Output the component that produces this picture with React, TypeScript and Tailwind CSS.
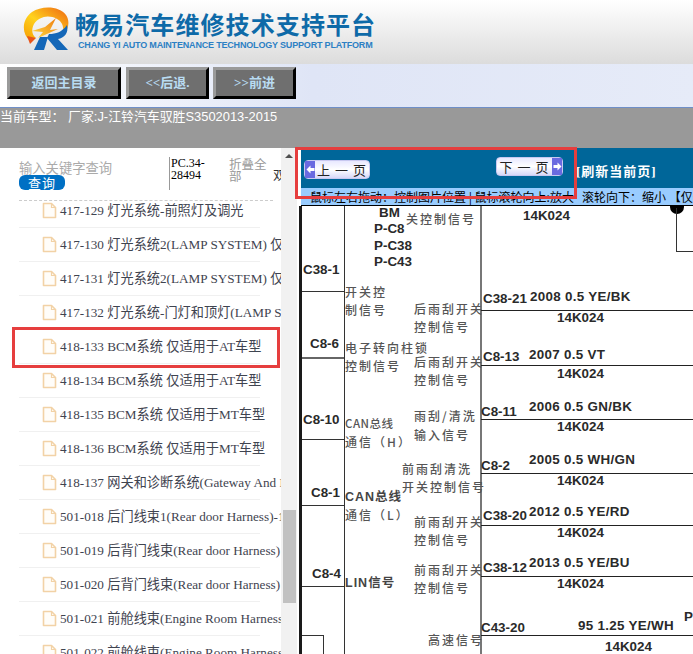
import React from "react";

const rows = [
  "417-129 灯光系统-前照灯及调光",
  "417-130 灯光系统2(LAMP SYSTEM) 仅适用于AT车型",
  "417-131 灯光系统2(LAMP SYSTEM) 仅适用于MT车型",
  "417-132 灯光系统-门灯和顶灯(LAMP SYSTEM)",
  "418-133 BCM系统 仅适用于AT车型",
  "418-134 BCM系统 仅适用于AT车型",
  "418-135 BCM系统 仅适用于MT车型",
  "418-136 BCM系统 仅适用于MT车型",
  "418-137 网关和诊断系统(Gateway And Diagnostic)",
  "501-018 后门线束1(Rear door Harness)-1",
  "501-019 后背门线束(Rear door Harness)",
  "501-020 后背门线束(Rear door Harness)",
  "501-021 前舱线束(Engine Room Harness)",
  "501-022 前舱线束(Engine Room Harness)",
];

type Kind = "b" | "y" | "c" | "m" | "s";
// [text, left, centerY, kind] in page coordinates.
const labels: [string, number, number, Kind][] = [
  ["BM", 379, 214, "b"], ["P-C8", 374, 230, "b"], ["P-C38", 374, 247, "b"], ["P-C43", 374, 263, "b"],
  ["关控制信号", 406, 220, "c"], ["14K024", 523, 217, "b"],
  ["C38-1", 303, 271, "b"], ["开关控", 345, 293, "c"], ["制信号", 345, 311, "c"],
  ["后雨刮开关", 414, 310, "c"], ["控制信号", 414, 328, "c"], ["C38-21", 483, 300, "b"],
  ["2008 0.5 YE/BK", 530, 298, "y"], ["14K024", 557, 319, "b"],
  ["C8-6", 310, 345, "b"], ["电子转向柱锁", 345, 349, "c"], ["控制信号", 345, 367, "c"],
  ["后雨刮开关", 414, 363, "c"], ["控制信号", 414, 381, "c"], ["C8-13", 483, 358, "b"],
  ["2007 0.5 VT", 529, 356, "y"], ["14K024", 557, 375, "b"],
  ["C8-10", 303, 421, "b"], ["CAN总线", 345, 425, "s"], ["通信（H）", 345, 443, "c"],
  ["雨刮/清洗", 414, 417, "c"], ["输入信号", 414, 436, "c"], ["C8-11", 481, 413, "b"],
  ["2006 0.5 GN/BK", 529, 408, "y"], ["14K024", 557, 428, "b"],
  ["C8-2", 481, 467, "b"], ["2005 0.5 WH/GN", 529, 461, "y"], ["14K024", 557, 482, "b"],
  ["前雨刮清洗", 402, 470, "c"], ["开关控制信号", 402, 488, "c"],
  ["C8-1", 311, 494, "b"], ["CAN总线", 345, 498, "m"], ["通信（L）", 345, 516, "c"],
  ["前雨刮开关", 414, 523, "c"], ["控制信号", 414, 541, "c"], ["C38-20", 483, 517, "b"],
  ["2012 0.5 YE/RD", 529, 513, "y"], ["14K024", 557, 534, "b"],
  ["C8-4", 312, 575, "b"], ["LIN信号", 345, 584, "m"], ["前雨刮开关", 414, 571, "c"], ["控制信号", 414, 589, "c"],
  ["C38-12", 483, 569, "b"], ["2013 0.5 YE/BU", 529, 564, "y"], ["14K024", 557, 585, "b"],
  ["P", 684, 618, "b"], ["95 1.25 YE/WH", 578, 627, "y"], ["C43-20", 481, 629, "b"],
  ["高速信号", 428, 641, "c"], ["14K024", 605, 648, "b"],
];

const labelClass: Record<Kind, string> = {
  b: "absolute -translate-y-1/2 whitespace-nowrap text-[13.4px] leading-none font-bold text-[#2a2a2a] font-['Liberation_Sans',sans-serif]",
  y: "absolute -translate-y-1/2 whitespace-nowrap text-[13.4px] leading-none tracking-[0.3px] font-bold text-[#2a2a2a] font-['Liberation_Sans',sans-serif]",
  c: "absolute -translate-y-1/2 whitespace-nowrap text-[12px] leading-none tracking-[2px] font-medium text-[#555] font-['Noto_Sans_CJK_SC',sans-serif]",
  m: "absolute -translate-y-1/2 whitespace-nowrap text-[12.5px] leading-none tracking-[1px] font-bold text-[#444] font-['Liberation_Sans','Noto_Sans_CJK_SC',sans-serif]",
  s: "absolute -translate-y-1/2 whitespace-nowrap text-[11.5px] leading-none tracking-[0.5px] font-medium text-[#555] font-['Noto_Sans_CJK_SC',sans-serif]",
};

function PageIcon() {
  return (
    <svg width="15" height="17" viewBox="0 0 15 17" className="shrink-0">
      <path d="M1.5 1.5H9.5L13.5 5.5V15.5H1.5Z" fill="#fffdf9" stroke="#f2d2a6" strokeWidth="1.6" strokeLinejoin="round" />
      <path d="M9.5 1.5V5.5H13.5" fill="none" stroke="#f2d2a6" strokeWidth="1.2" />
    </svg>
  );
}

function Logo() {
  return (
    <svg width="50" height="46" viewBox="22 6 50 46" className="shrink-0">
      <defs>
        <linearGradient id="ring" x1="0" y1="1" x2="1" y2="0">
          <stop offset="0" stopColor="#f59a00" />
          <stop offset="0.45" stopColor="#ffd21e" />
          <stop offset="1" stopColor="#ee6410" />
        </linearGradient>
        <linearGradient id="bolt" x1="0" y1="1" x2="1" y2="0">
          <stop offset="0" stopColor="#ffdc40" />
          <stop offset="1" stopColor="#ee7a10" />
        </linearGradient>
      </defs>
      <path d="M30 41C21 33 22 19 32 12C42 5 60 6 66 15C70 21 69 29 63 35C64 28 63 22 57 19C48 14 39 17 34 24C31 30 32 35 36 38L31 38Z" fill="url(#ring)" />
      <path d="M27 36L36 38L30 44Z" fill="#e8541a" />
      <path d="M32 31L45 27L56 18L50 30L58 29L38 38L43 32Z" fill="url(#bolt)" />
      <path d="M40 37L48 37L44 50L34 50Z" fill="#1467b8" />
      <path d="M49 34C56 34 62 32 67 25C69 33 64 38 58 39L68 50L57 50L47 38Z" fill="#1467b8" />
    </svg>
  );
}

function NavButton({ label, width }: { label: string; width: string }) {
  return (
    <button className={`${width} h-[32px] bg-[#6f6f6f] border-[3px] border-t-[#9a9a9a] border-l-[#9a9a9a] border-r-black border-b-black text-[#b9dcf2] font-bold text-[13px] font-['Liberation_Serif','Noto_Sans_CJK_SC',serif]`}>
      {label}
    </button>
  );
}

function PageButton({ label, dir, extra }: { label: string; dir: "left" | "right"; extra: string }) {
  const arrow = (
    <span className="w-[10px] shrink-0 self-stretch bg-[#6a6ae0] flex items-center justify-center">
      <svg width="9" height="9" viewBox="0 0 9 9">
        <path d={dir === "left" ? "M0.5 4.5L4.5 0.5V3H8.5V6H4.5V8.5Z" : "M8.5 4.5L4.5 0.5V3H0.5V6H4.5V8.5Z"} fill="#fff" />
      </svg>
    </span>
  );
  return (
    <div className={`flex items-center h-[19px] rounded-sm bg-gradient-to-b from-[#e8e8ff] via-white to-[#d8d8f8] border border-[#c8c8f0] text-[13px] tracking-[1px] text-[#222] font-['Noto_Sans_CJK_SC',sans-serif] ${extra}`}>
      {dir === "left" && arrow}
      <span className="flex-1 min-w-0 text-center whitespace-nowrap">{label}</span>
      {dir === "right" && arrow}
    </div>
  );
}

function Diagram() {
  const ox = 297;
  const oy = 207;
  const h = (x1: number, x2: number, y: number, cls: string) => (
    <div className={`absolute ${cls}`} style={{ left: x1 - ox, width: x2 - x1, top: y - oy }} />
  );
  return (
    <div className="relative flex-1 bg-white overflow-hidden">
      {/* vertical rules */}
      <div className="absolute left-[2px] top-0 bottom-0 w-[3px] bg-[#1a1a1a]" />
      <div className="absolute left-[47px] top-0 bottom-0 w-px bg-[#333]" />
      <div className="absolute left-[183px] top-0 bottom-0 w-[2px] bg-[#777]" />
      {/* left column rules */}
      {h(302, 344, 292, "h-px bg-[#333]")}
      {h(302, 344, 358, "h-[2px] bg-[#666]")}
      {h(302, 344, 440, "h-px bg-[#333]")}
      {h(302, 344, 506, "h-px bg-[#333]")}
      {h(302, 344, 587, "h-px bg-[#333]")}
      {h(302, 323, 636, "h-px bg-[#333]")}
      <div className="absolute left-[26px] top-[429px] bottom-0 w-px bg-[#333]" />
      {/* wire rules */}
      {[311, 366, 420, 474, 526, 577, 636].map((y) => (
        <React.Fragment key={y}>{h(481, 693, y, "h-px bg-[#222]")}</React.Fragment>
      ))}
      {/* node */}
      <div className="absolute left-[373px] top-[-6px] w-[14px] h-[14px] rounded-full bg-black" />
      <div className="absolute left-[379px] top-[2px] w-px h-[43px] bg-[#333]" />
      <div className="absolute left-[379px] top-[45px] w-[20px] h-px bg-[#333]" />
      {labels.map(([t, x, y, k], i) => (
        <span key={i} className={labelClass[k]} style={{ left: x - ox, top: y - oy }}>
          {t}
        </span>
      ))}
    </div>
  );
}

export default function App() {
  return (
    <div className="relative w-[693px] h-[654px] overflow-hidden bg-white flex flex-col">
      {/* Brand header */}
      <header className="h-[64px] shrink-0 bg-gradient-to-b from-white to-[#dcdcdc] flex items-start pl-[22px] pt-[6px]">
        <Logo />
        <div className="ml-[3px] mt-[3px] flex flex-col">
          <div className="text-[24px] leading-[30px] tracking-[1.1px] font-bold text-[#0e6aa8] whitespace-nowrap font-['Noto_Sans_CJK_SC',sans-serif]">
            畅易汽车维修技术支持平台
          </div>
          <div className="ml-[3px] text-[9px] leading-[12px] tracking-[-0.02em] font-bold text-[#2c80c4] whitespace-nowrap font-['Liberation_Sans',sans-serif]">
            CHANG YI AUTO MAINTENANCE TECHNOLOGY SUPPORT PLATFORM
          </div>
        </div>
      </header>

      {/* Nav */}
      <nav className="h-[44px] shrink-0 bg-gradient-to-r from-white via-[#dfe5f6] via-45% to-[#e6ebf8] border-b-[1px] border-b-[#6f8fc8] flex items-start pl-[7px] pt-[3px]">
        <NavButton label="返回主目录" width="w-[114px]" />
        <div className="w-[5px]" />
        <NavButton label="<<后退." width="w-[83px]" />
        <div className="w-[4px]" />
        <NavButton label=">>前进" width="w-[83px]" />
      </nav>

      {/* Current model */}
      <div className="h-[40px] shrink-0 bg-[#999999] pt-px text-white text-[12.9px] leading-[16px] whitespace-nowrap font-['Liberation_Sans','Noto_Sans_CJK_SC',sans-serif]">
        当前车型： 厂家:J-江铃汽车驭胜S3502013-2015
      </div>

      {/* Main */}
      <main className="flex-1 min-h-0 flex">
        {/* Tree */}
        <aside className="w-[281px] shrink-0 overflow-hidden flex flex-col">
          <div className="h-[53px] shrink-0 relative z-10 bg-white ml-[19px] mr-[8px] border-b border-dashed border-[#ccc]">
            <div className="absolute left-0 top-[13px] text-[13.3px] leading-[13px] text-[#aaa] whitespace-nowrap font-['Noto_Sans_CJK_SC',sans-serif]">
              输入关键字查询
            </div>
            <button className="absolute left-0 top-[27px] w-[46px] h-[15px] rounded-md bg-[#0070c4] text-white text-[13px] leading-[15px] tracking-[1px] font-['Noto_Sans_CJK_SC',sans-serif]">
              查询
            </button>
            <div className="absolute left-[150px] top-[9px] w-[40px] h-[33px] border-l border-[#999] pl-px text-[12px] leading-[12px] text-black font-['Liberation_Serif',serif]">
              PC.34-
              <br />
              28494
            </div>
            <div className="absolute left-[210px] top-[10px] w-[38px] text-[12.5px] leading-[12px] text-[#999] font-['Noto_Sans_CJK_SC',sans-serif]">
              折叠全部
            </div>
            <div className="absolute left-[254px] top-[20px] w-[8px] overflow-hidden text-[12.5px] leading-[14px] text-[#333] font-['Noto_Sans_CJK_SC',sans-serif]">
              双
            </div>
          </div>
          <ul className="flex-1 min-h-0 -mt-[7px] overflow-hidden">
            {rows.map((r) => (
              <li
                key={r}
                className="h-[34px] ml-[19px] w-[241px] border-b border-[#f0f0f0] flex items-center pl-[23px] text-[13.2px] text-[#3f4450] whitespace-nowrap font-['Liberation_Serif','Noto_Sans_CJK_SC',serif]"
              >
                <PageIcon />
                <span className="ml-[3px]">{r}</span>
              </li>
            ))}
          </ul>
        </aside>

        {/* Scrollbar */}
        <div className="w-[16px] shrink-0 bg-[#f1f1f1] relative">
          <div className="flex justify-center pt-[6px]">
            <div className="w-0 h-0 border-l-[4px] border-r-[4px] border-b-[4px] border-l-transparent border-r-transparent border-b-[#505050]" />
          </div>
          <div className="absolute left-[2px] right-[1px] top-[362px] h-[93px] bg-[#c1c1c1]" />
        </div>

        {/* Viewer */}
        <section className="flex-1 min-w-0 flex flex-col bg-white">
          <div className="h-[40px] shrink-0 ml-[4px] bg-[#006699] relative">
            <div className="flex items-start pt-[10px]">
              <PageButton label="上 一 页" dir="left" extra="w-[66px] ml-[3px] mt-[2px]" />
              <PageButton label="下 一 页" dir="right" extra="w-[67px] ml-[126px] -mt-[1px]" />
              <span className="ml-[13px] mt-[5px] text-[13px] leading-[18px] tracking-[1px] font-bold text-white whitespace-nowrap font-['Liberation_Serif','Noto_Sans_CJK_SC',serif]">
                [刷新当前页]
              </span>
            </div>
          </div>
          <div className="h-[18px] shrink-0 ml-[4px] pl-[9px] bg-[#99ccff] border-b border-black text-[12px] leading-[18px] text-black whitespace-nowrap overflow-hidden font-['Noto_Sans_CJK_SC',sans-serif]">
            鼠标左右拖动：控制图片位置 | 鼠标滚轮向上:放大{"\u00a0\u00a0\u00a0"}滚轮向下：缩小 【仅适用于AT车型】
          </div>
          <Diagram />
        </section>
      </main>

      {/* Red annotation boxes */}
      <div className="absolute left-[12px] top-[327px] w-[268px] h-[41px] border-[3px] border-[#e63e3e]" />
      <div className="absolute left-[295px] top-[147px] w-[282px] h-[52px] border-[3px] border-[#e63e3e]" />
    </div>
  );
}
